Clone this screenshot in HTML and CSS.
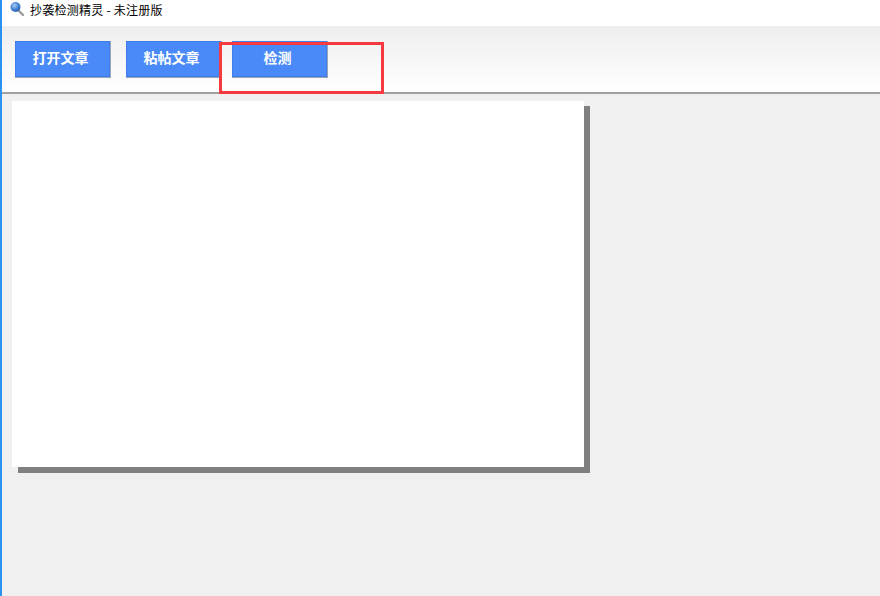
FILE: index.html
```html
<!DOCTYPE html>
<html lang="zh">
<head>
<meta charset="utf-8">
<title>抄袭检测精灵</title>
<link rel="stylesheet" href="styles.css">
</head>
<body>
<div class="window">
  <header class="titlebar">
    <svg class="app-icon" width="16" height="16" viewBox="0 0 16 16">
      <defs>
        <radialGradient id="lens" cx="0.4" cy="0.35" r="0.7">
          <stop offset="0" stop-color="#a9cdf5"/>
          <stop offset="0.6" stop-color="#3f7fd0"/>
          <stop offset="1" stop-color="#2a5aa8"/>
        </radialGradient>
      </defs>
      <line x1="9.5" y1="9.5" x2="14" y2="14" stroke="#9a9a9a" stroke-width="2.4" stroke-linecap="round"/>
      <circle cx="6.5" cy="6" r="5" fill="url(#lens)"/>
    </svg>
    <span class="title">抄袭检测精灵 - 未注册版</span>
  </header>
  <nav class="toolbar">
    <button class="btn btn-open">打开文章</button>
    <button class="btn btn-paste">粘帖文章</button>
    <button class="btn btn-check">检测</button>
  </nav>
  <main class="content">
    <div class="panel"></div>
  </main>
  <div class="highlight"></div>
</div>
</body>
</html>
```
FILE: styles.css
```css
* { box-sizing: border-box; }
html, body { margin: 0; padding: 0; height: 100%; overflow: hidden; }
body { font-family: "Noto Sans CJK SC", "Liberation Sans", sans-serif; }
.window {
  position: relative;
  width: 880px;
  height: 596px;
  display: flex;
  flex-direction: column;
  border-left: 2px solid #2b90ee;
  background: #f0f0f0;
}
.titlebar {
  height: 26px;
  flex: none;
  background: #fff;
  display: flex;
  align-items: flex-start;
  padding: 1px 0 0 7px;
  gap: 5px;
}
.app-icon { flex: none; }
.title {
  font-size: 12px;
  line-height: 18px;
  letter-spacing: 0.25px;
  color: #000;
}
.toolbar {
  height: 68px;
  flex: none;
  display: flex;
  align-items: flex-start;
  padding: 15px 0 0 13px;
  background: linear-gradient(#eeeeee, #ffffff);
  border-bottom: 2px solid #a0a0a0;
}
.btn {
  width: 96px;
  height: 37px;
  padding: 0 4px 5px 0;
  border: 0;
  border-right: 1px solid #9aa6b8;
  border-bottom: 1px solid #9aa6b8;
  background: #4a8af8;
  box-shadow: inset 0 0 0 1px #3f7de8;
  color: #fff;
  font-family: "Noto Sans CJK SC", sans-serif;
  font-size: 14px;
  font-weight: 700;
}
.btn-paste { margin-left: 15px; }
.btn-check { margin-left: 10px; }
.content {
  flex: 1;
  padding: 7px 0 0 10px;
}
.panel {
  width: 572px;
  height: 366px;
  background: #fff;
  box-shadow: 6px 6px 0 #808080, 6px 5px 0 #808080;
}
.highlight {
  position: absolute;
  left: 217px;
  top: 42px;
  width: 165px;
  height: 52px;
  border: 3px solid #f63a3e;
}
```
